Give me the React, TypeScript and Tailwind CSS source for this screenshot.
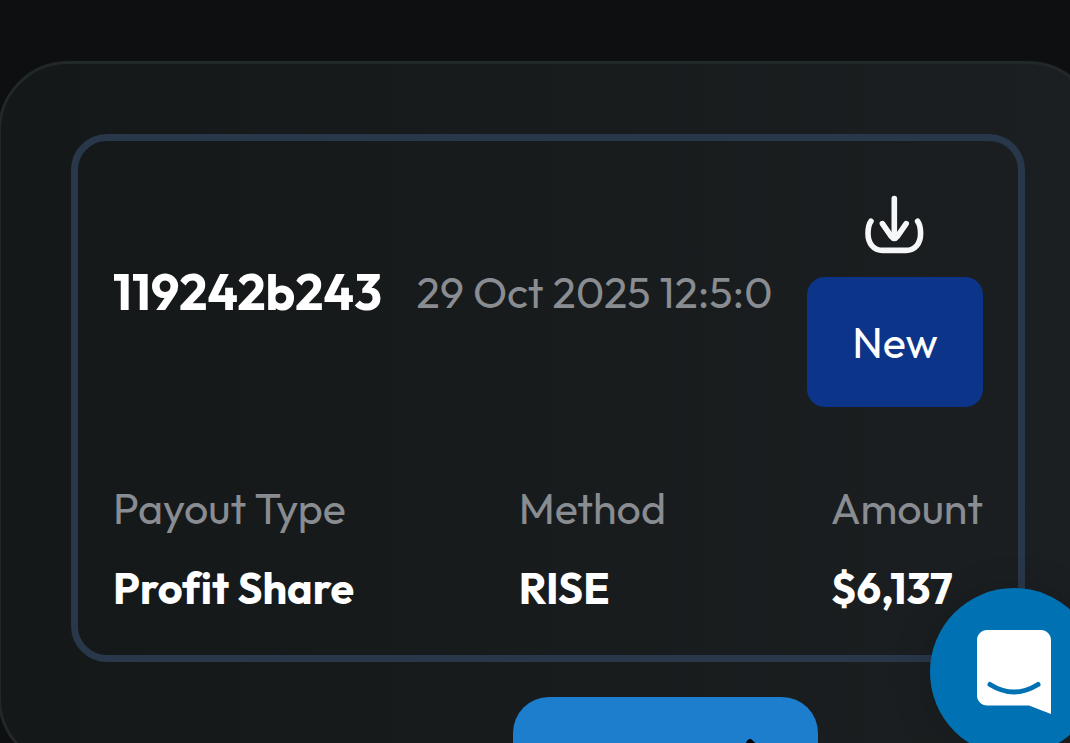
import { ArrowRight } from "lucide-react";

const details = [
  { label: "Payout Type", value: "Profit Share" },
  { label: "Method", value: "RISE" },
  { label: "Amount", value: "$6,137" },
];

function DownloadIcon() {
  return (
    <svg
      viewBox="1 0 60 60"
      className="size-[60px]"
      fill="none"
      stroke="currentColor"
      strokeWidth="5.6"
      strokeLinecap="round"
      strokeLinejoin="round"
      aria-hidden="true"
    >
      <path d="M30.3 3.6V43" />
      <path d="M18.4 28.6L27.4 41.6Q30.3 45.4 33.2 41.6L42.2 28.6" />
      <path d="M7 26.2C4.4 29.6 4 33 4 38.5C4 48.5 9.6 55.4 18.6 55.4H42C51 55.4 56.6 48.5 56.6 38.5C56.6 33 56.2 29.6 53.6 26.2" />
    </svg>
  );
}

function ChatIcon() {
  return (
    <svg viewBox="0 0 74 85" className="h-[85px] w-[74px]" aria-hidden="true">
      <path
        d="M10 0H64C69.5 0 74 4.5 74 10V84L52 75.5H10C4.5 75.5 0 71 0 65.5V10C0 4.5 4.5 0 10 0Z"
        fill="#ffffff"
      />
      <path
        d="M13 54.5Q37 69.5 61 54.5"
        fill="none"
        stroke="#0071b2"
        strokeWidth="5"
        strokeLinecap="round"
      />
    </svg>
  );
}

export default function App() {
  return (
    <main className="h-screen overflow-hidden bg-[#0e0f11] pt-[61px] font-['Outfit','Lato','Open_Sans',sans-serif] [font-variant-ligatures:none]">
      <section className="-mr-7 -ml-[2px] rounded-[70px] border-[3px] border-[#22282a] bg-linear-to-r from-[#141819] to-[#1b1f21] px-[70px] pt-[70px]">
        <article className="rounded-[36px] border-[7px] border-[#29374a] px-[35px] pt-9 pb-10">
          <header className="flex items-center justify-between">
            <h2 className="text-[50px] leading-[54px] font-bold whitespace-nowrap text-white">
              119242b243
            </h2>
            <time className="text-[43px] leading-[54px] whitespace-nowrap text-[#898c91]">
              29 Oct 2025 12:5:0
            </time>
            <div className="flex w-44 flex-col items-center gap-[22px] pt-[18px]">
              <button type="button" aria-label="Download" className="text-[#f6f7f8]">
                <DownloadIcon />
              </button>
              <span className="flex h-[130px] w-full items-center justify-center rounded-[18px] bg-[#0c3488] text-[43px] leading-[54px] text-white">
                New
              </span>
            </div>
          </header>
          <dl className="mt-[74px] flex justify-between whitespace-nowrap">
            {details.map((item) => (
              <div key={item.label} className="flex flex-col gap-[26px] leading-[54px]">
                <dt className="text-[43px] text-[#898c91]">{item.label}</dt>
                <dd className="text-[43px] font-bold text-white">{item.value}</dd>
              </div>
            ))}
          </dl>
        </article>
        <div className="-mb-14 flex justify-end pt-[35px] pr-[207px]">
          <button
            type="button"
            aria-label="Next"
            className="flex h-[124px] w-[305px] items-center justify-end rounded-[36px] bg-[#1d7ecd] pr-10 text-black"
          >
            <ArrowRight className="size-14" strokeWidth={3} />
          </button>
        </div>
      </section>
      <button
        type="button"
        aria-label="Open chat"
        className="fixed -right-7 -bottom-[13px] flex size-42 items-center justify-center rounded-full bg-[#0071b2] shadow-[0_4px_40px_rgba(0,0,0,0.15)]"
      >
        <ChatIcon />
      </button>
    </main>
  );
}
